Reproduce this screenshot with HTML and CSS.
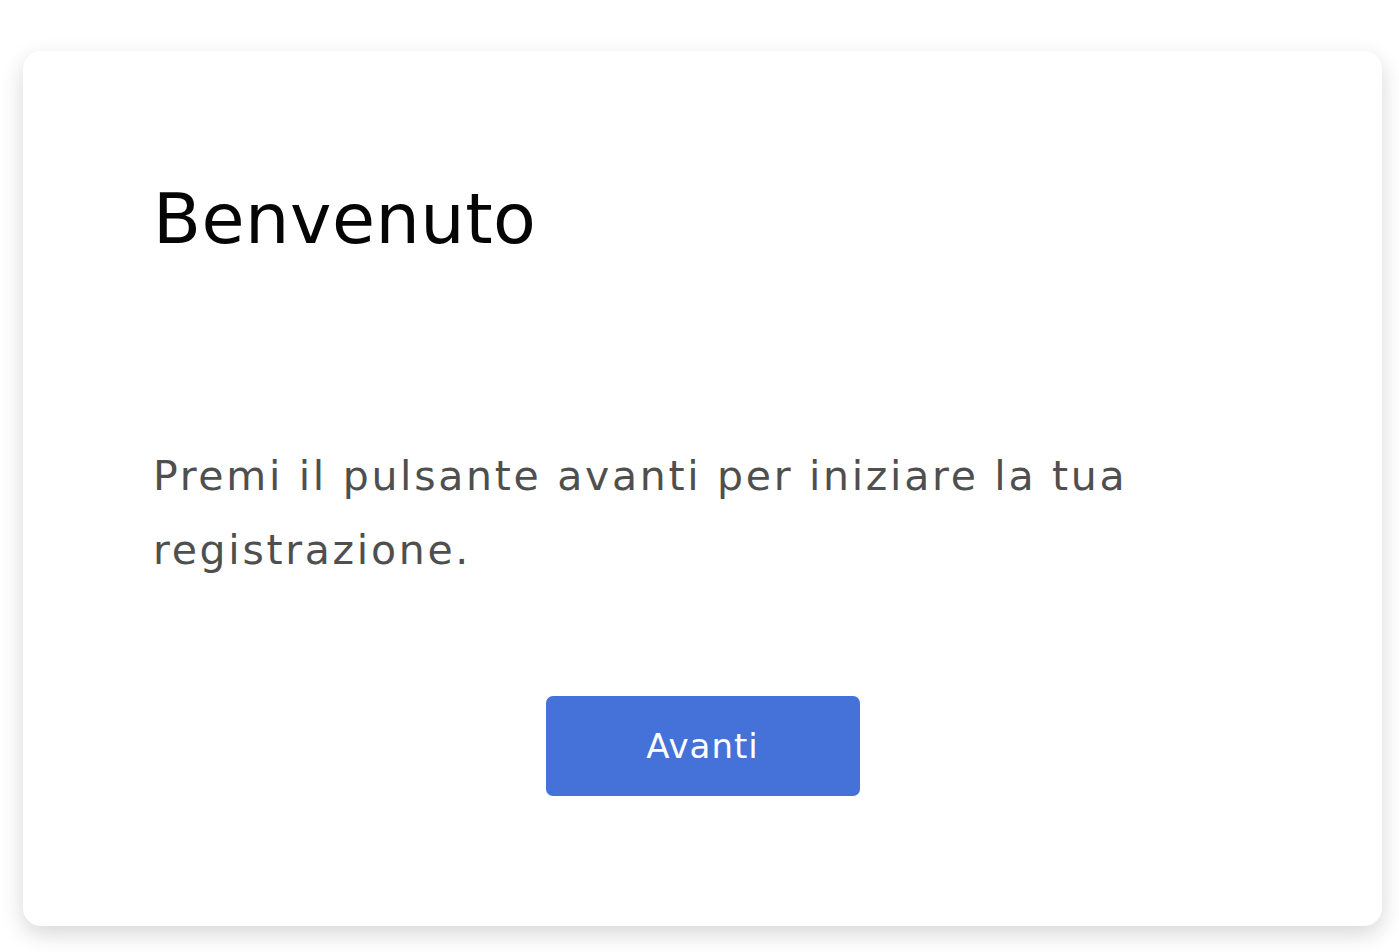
FILE: index.html
```html
<!DOCTYPE html>
<html lang="it">
<head>
<meta charset="utf-8">
<title>Benvenuto</title>
<link rel="stylesheet" href="styles.css">
</head>
<body>
<main class="card">
  <h1 class="title">Benvenuto</h1>
  <p class="lead">Premi il pulsante avanti per iniziare la tua registrazione.</p>
  <div class="actions">
    <button class="btn" type="button">Avanti</button>
  </div>
</main>
</body>
</html>
```

FILE: styles.css
```css
html, body {
  margin: 0;
  padding: 0;
  background: #ffffff;
}
body {
  font-family: "DejaVu Sans", "Open Sans", "Liberation Sans", sans-serif;
  padding: 51px 17px 26px 23px;
}
.card {
  box-sizing: border-box;
  height: 875px;
  background: #ffffff;
  border-radius: 18px;
  box-shadow: 0 8px 22px rgba(0, 0, 0, 0.16);
  padding: 120px 130px 0 130px;
  display: flex;
  flex-direction: column;
}
.title {
  margin: 0;
  font-size: 70px;
  font-weight: 400;
  line-height: 96px;
  color: #050505;
  letter-spacing: 0.5px;
}
.lead {
  margin: 172px 0 0 0;
  font-size: 41px;
  line-height: 74px;
  letter-spacing: 2.7px;
  color: #4f4f4f;
}
.actions {
  display: flex;
  justify-content: center;
  margin-top: 109px;
}
.btn {
  width: 314px;
  height: 100px;
  border: 0;
  border-radius: 7px;
  background: #4472d8;
  color: #ffffff;
  font-family: inherit;
  font-size: 34px;
  letter-spacing: 1px;
  cursor: pointer;
}
```
